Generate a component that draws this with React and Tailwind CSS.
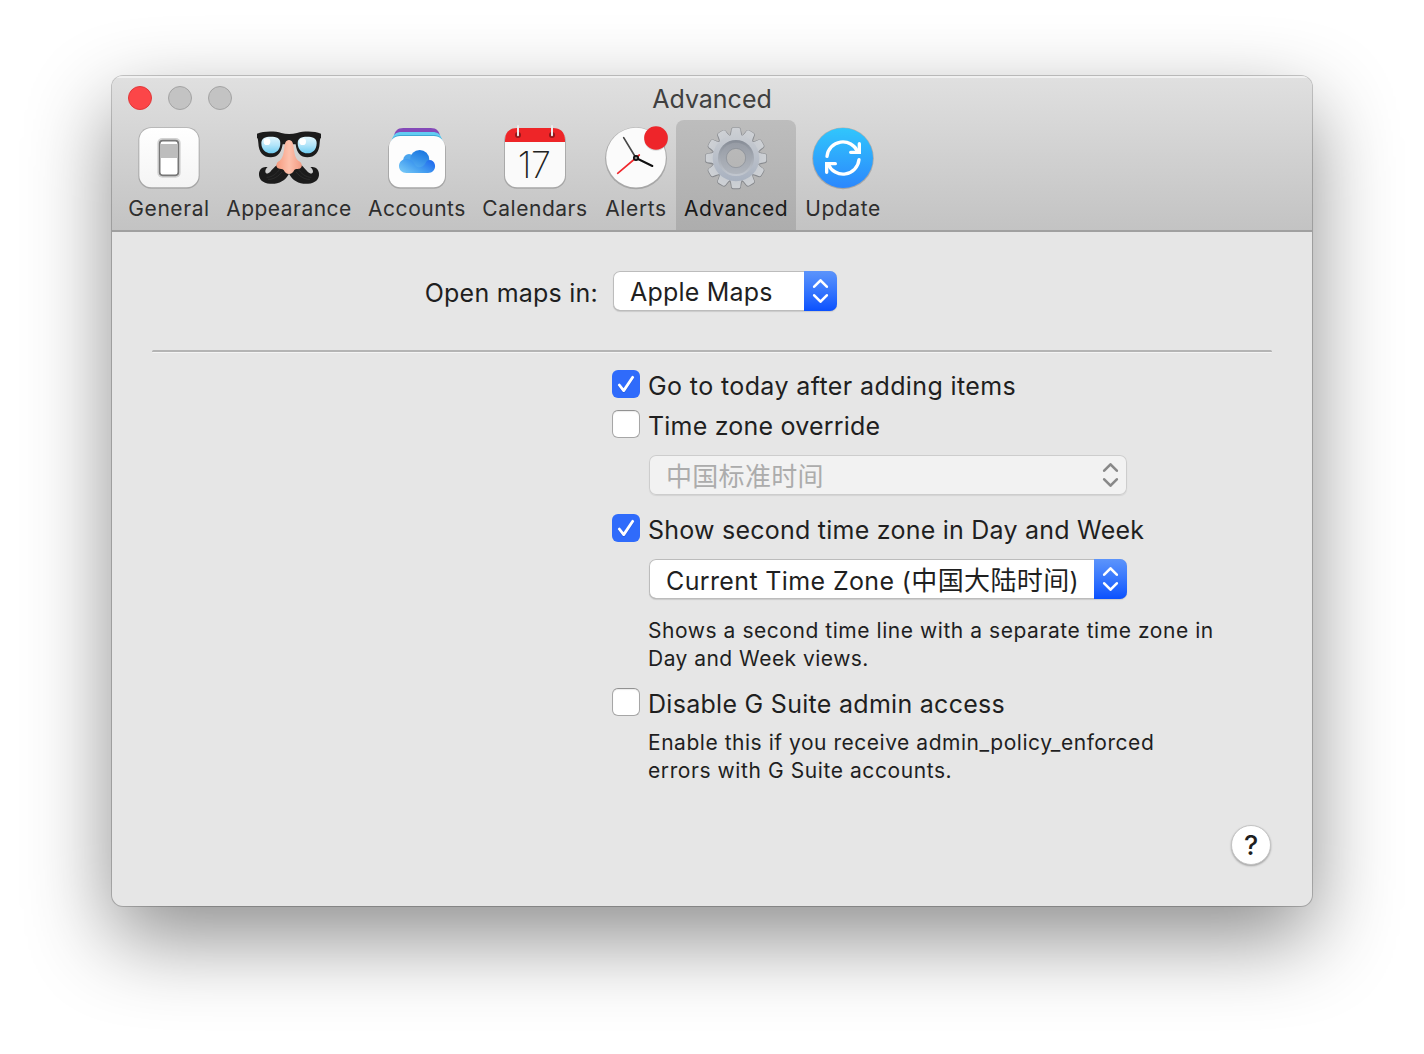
function GeneralIcon() {
  return (
    <svg viewBox="111 183 192 192" className="size-16 overflow-visible">
      <defs>
        <linearGradient id="tile" x1="0" y1="0" x2="0" y2="1">
          <stop offset="0" stopColor="#ffffff" />
          <stop offset="1" stopColor="#f4f4f4" />
        </linearGradient>
      </defs>
      <rect x="115" y="187" width="184" height="184" rx="38" fill="#000" opacity="0.18" />
      <rect x="118" y="189" width="178" height="178" rx="36" fill="url(#tile)" />
      <rect x="172" y="219" width="70" height="119" rx="15" fill="#d2d2d2" />
      <rect x="179" y="227" width="56" height="104" rx="9" fill="#fff" stroke="#777" strokeWidth="5" />
      <rect x="183" y="237" width="48" height="42" fill="#bdbdbd" />
    </svg>
  );
}

function AppearanceIcon() {
  return (
    <svg viewBox="51 33 192 192" className="size-16 overflow-visible">
      <defs>
        <linearGradient id="lens" x1="0" y1="0" x2="0" y2="1">
          <stop offset="0" stopColor="#e2f6fd" />
          <stop offset="0.5" stopColor="#b4e5f9" />
          <stop offset="1" stopColor="#6fcdf2" />
        </linearGradient>
        <linearGradient id="nose" x1="0" y1="0" x2="1" y2="0">
          <stop offset="0" stopColor="#f59a7e" />
          <stop offset="0.5" stopColor="#fdc1ac" />
          <stop offset="1" stopColor="#f29a82" />
        </linearGradient>
      </defs>
      <g fill="#1c1c1c">
        <path d="M51 56 C70 48 105 48 124 54 C138 58 156 58 171 54 C192 48 224 48 243 56 L243 68 C240 70 240 74 239 84 C238 112 224 127 202 127 C182 127 170 114 167 88 L128 88 C124 114 112 127 92 127 C70 127 56 112 55 84 C54 74 54 70 51 68 Z" />
        <path d="M147 176 C136 198 114 208 90 206 C68 205 56 192 57 176 C58 162 70 153 83 157 C78 160 76 165 76 170 C77 177 84 177 91 170 C101 159 110 148 120 148 L174 148 C186 148 192 159 203 170 C210 177 218 177 219 170 C219 165 216 160 211 157 C224 153 236 162 237 176 C238 192 226 205 204 206 C180 208 158 198 147 176 Z" />
      </g>
      <g fill="none" stroke="#4a4a4a" strokeWidth="2" opacity="0.5">
        <path d="M84 193 C100 194 115 184 126 171 M80 187 C98 187 111 174 119 163 M210 193 C194 194 179 184 168 171 M214 187 C196 187 183 174 175 163" />
      </g>
      <path d="M64 84 C64 69 76 65 92 65 C110 65 121 69 121 84 C121 104 109 115 93 115 C76 115 64 103 64 84 Z" fill="url(#lens)" />
      <path d="M173 84 C173 69 185 65 201 65 C218 65 230 69 230 84 C230 104 218 115 202 115 C185 115 173 103 173 84 Z" fill="url(#lens)" />
      <circle cx="81" cy="80" r="10" fill="#fff" />
      <circle cx="188" cy="80" r="10" fill="#fff" />
      <path d="M147 75 C137 75 134 86 133 98 C131 118 127 130 119 137 C108 142 106 154 114 160 C121 164 127 160 131 165 C135 173 140 177 147 177 C154 177 159 173 163 165 C167 160 174 164 181 160 C189 154 186 142 175 137 C167 130 163 118 161 98 C160 86 157 75 147 75 Z" fill="url(#nose)" />
    </svg>
  );
}

function AccountsIcon() {
  return (
    <svg viewBox="75 33 192 192" className="size-16 overflow-visible">
      <defs>
        <linearGradient id="cloud" x1="0" y1="1" x2="1" y2="0.4">
          <stop offset="0" stopColor="#7fcff8" />
          <stop offset="0.55" stopColor="#459ff0" />
          <stop offset="1" stopColor="#2470ee" />
        </linearGradient>
        <linearGradient id="puff" x1="0.2" y1="1" x2="0.6" y2="0">
          <stop offset="0" stopColor="#57b0f3" />
          <stop offset="1" stopColor="#1a77e0" />
        </linearGradient>
      </defs>
      <rect x="84" y="66" width="174" height="155" rx="36" fill="#000" opacity="0.18" />
      <path d="M101 70 C103 48 112 39 130 39 L212 39 C230 39 239 48 241 70 Z" fill="#8449b8" />
      <path d="M95 78 C99 58 108 51 126 51 L216 51 C234 51 243 58 247 78 Z" fill="#63cdf2" />
      <path d="M92 84 C96 67 106 60 124 60 L218 60 C236 60 246 67 250 84 Z" fill="#3fa9d4" />
      <rect x="87" y="63" width="168" height="154" rx="34" fill="#fdfdfd" />
      <circle cx="147" cy="134" r="17" fill="#4ba5ee" />
      <circle cx="179" cy="134" r="29" fill="url(#puff)" />
      <path d="M139 174 C126 174 117 165 117 153 C117 142 125 133 137 132 C150 131 162 140 165 150 C174 162 190 158 198 142 C204 130 222 134 225 150 C227 164 217 174 204 174 Z" fill="url(#cloud)" />
    </svg>
  );
}

function CalendarsIcon() {
  return (
    <svg viewBox="429 33 192 192" className="size-16 overflow-visible">
      <rect x="432" y="40" width="186" height="181" rx="38" fill="#000" opacity="0.18" />
      <rect x="435" y="39" width="180" height="178" rx="36" fill="#fafafa" />
      <path d="M435 81 L435 75 C435 52 449 39 471 39 L579 39 C601 39 615 52 615 75 L615 81 Z" fill="#ee2528" />
      <circle cx="474" cy="60" r="9" fill="#94171b" />
      <circle cx="576" cy="60" r="9" fill="#94171b" />
      <path d="M474 33 V61 M576 33 V61" stroke="#ececec" strokeWidth="6" strokeLinecap="round" />
      <text x="522" y="188" textAnchor="middle" fontSize="108" fontWeight="200" letterSpacing="-2" fill="#222" className="font-['Inter',sans-serif]">17</text>
    </svg>
  );
}

function AlertsIcon() {
  return (
    <svg viewBox="42 33 192 192" className="size-16 overflow-visible">
      <circle cx="138" cy="130" r="93" fill="#000" opacity="0.18" />
      <circle cx="138" cy="128" r="89.500" fill="#fbfbfb" />
      <g strokeLinecap="round" fill="none">
        <path d="M138 129 L101 68" stroke="#484848" strokeWidth="5" />
        <path d="M148 120 L83 175" stroke="#f0282d" strokeWidth="5" />
        <path d="M138 129 L187 153" stroke="#111" strokeWidth="6" />
      </g>
      <circle cx="138" cy="129" r="6.500" fill="#888" stroke="#0d0d0d" strokeWidth="5" />
      <circle cx="198" cy="71" r="36" fill="#000" opacity="0.15" />
      <circle cx="198" cy="69" r="35.500" fill="#ee252a" />
    </svg>
  );
}

const TEETH = [0, 30, 60, 90, 120, 150, 180, 210, 240, 270, 300, 330];

function AdvancedIcon() {
  return (
    <svg viewBox="102 153 192 192" className="size-16 overflow-visible">
      <defs>
        <linearGradient id="gear" gradientUnits="userSpaceOnUse" x1="0" y1="158" x2="0" y2="340">
          <stop offset="0" stopColor="#ced1d5" />
          <stop offset="0.5" stopColor="#b9bfc9" />
          <stop offset="1" stopColor="#a3adbd" />
        </linearGradient>
        <linearGradient id="ring" x1="0" y1="0" x2="0" y2="1">
          <stop offset="0" stopColor="#868c96" />
          <stop offset="1" stopColor="#c3c8d0" />
        </linearGradient>
        <linearGradient id="dish" x1="0" y1="0" x2="0" y2="1">
          <stop offset="0" stopColor="#979ca5" />
          <stop offset="1" stopColor="#b0b5bd" />
        </linearGradient>
        <mask id="bore">
          <rect x="90" y="140" width="220" height="220" fill="#fff" />
          <circle cx="198" cy="249" r="28" fill="#000" />
        </mask>
        <g id="cog">
          {TEETH.map((a) => (
            <path key={a} transform={`rotate(${a} 198 249)`} d="M176 190 C184 180 184 173 185 163 Q186 158 191 158 L205 158 Q210 158 211 163 C212 173 212 180 220 190 Z" />
          ))}
          <circle cx="198" cy="249" r="70" />
        </g>
      </defs>
      <g mask="url(#bore)">
        <use href="#cog" fill="#5f646c" stroke="#686c73" strokeWidth="4" opacity="0.6" transform="translate(0 1)" />
        <use href="#cog" fill="url(#gear)" />
        <circle cx="198" cy="249" r="54" fill="url(#ring)" />
        <circle cx="198" cy="250" r="47" fill="url(#dish)" />
      </g>
      <circle cx="198" cy="249" r="29" fill="none" stroke="#8b8f96" strokeWidth="2" />
    </svg>
  );
}

function UpdateIcon() {
  return (
    <svg viewBox="423 153 192 192" className="size-16 overflow-visible">
      <defs>
        <linearGradient id="sync" x1="0" y1="0" x2="0" y2="1">
          <stop offset="0" stopColor="#31c6fc" />
          <stop offset="1" stopColor="#2b87fd" />
        </linearGradient>
      </defs>
      <circle cx="519" cy="250" r="92.500" fill="#000" opacity="0.18" />
      <circle cx="519" cy="249" r="90" fill="url(#sync)" />
      <g fill="none" stroke="#fff" strokeWidth="10" strokeLinecap="round">
        <path d="M471 244 A48 48 0 0 1 563 230" />
        <path d="M567 254 A48 48 0 0 1 475 268" />
        <path d="M568 206 V232 H542" />
        <path d="M470 292 V266 H496" />
      </g>
      <path d="M568 218 V232 H554 Z M470 280 V266 H484 Z" fill="#fff" />
    </svg>
  );
}

const TABS = [
  { name: "General", Icon: GeneralIcon, width: "w-[98px]", track: "tracking-[0.57px]" },
  { name: "Appearance", Icon: AppearanceIcon, width: "w-[142px]", track: "tracking-[0.48px]" },
  { name: "Accounts", Icon: AccountsIcon, width: "w-[114px]", track: "tracking-[0.52px]" },
  { name: "Calendars", Icon: CalendarsIcon, width: "w-[122px]", track: "tracking-[0.54px]" },
  { name: "Alerts", Icon: AlertsIcon, width: "w-[80px]", track: "tracking-[0.65px]" },
  { name: "Advanced", Icon: AdvancedIcon, width: "w-[120px]", track: "tracking-[0.45px]", active: true },
  { name: "Update", Icon: UpdateIcon, width: "w-[94px]", track: "tracking-[0.6px]" },
];

function Chevrons() {
  return (
    <svg viewBox="0 0 33 40" className="h-10 w-[33px]" fill="none" stroke="currentColor" strokeWidth="2.600" strokeLinecap="round" strokeLinejoin="round">
      <path d="M10.200 15.700 L16.500 9.300 L22.800 15.700 M10.200 24.300 L16.500 30.700 L22.800 24.300" />
    </svg>
  );
}

function Select({ children, width, disabled }) {
  return (
    <div className={`${width} flex h-10 overflow-hidden rounded-[7px] ${disabled ? "bg-[#f2f2f2] text-[#acacac] shadow-[inset_0_0_0_1px_#cdcdcd,0_1px_1px_rgba(0,0,0,0.08)]" : "bg-white text-[#1f1f1f] shadow-[inset_0_0_0_1px_#bcbcbc,inset_0_-1px_0_#a8a8a8,0_1px_1px_rgba(0,0,0,0.12)]"}`}>
      <div className="flex flex-1 items-center pl-[17px] text-[25px] whitespace-nowrap">{children}</div>
      <div className={disabled ? "text-[#888888]" : "bg-linear-to-b from-[#5c94fb] to-[#0a50fe] text-white"}>
        <Chevrons />
      </div>
    </div>
  );
}

function Checkbox({ checked, children }) {
  return (
    <div className="flex h-7 items-center">
      {checked ? (
        <div className="size-7 shrink-0 rounded-md bg-[#2f6bfb]">
          <svg viewBox="0 0 28 28" className="size-7" fill="none" strokeLinecap="round" strokeLinejoin="round" strokeWidth="2.800">
            <path d="M7.300 16 L11.700 21.600 L20.700 8.300" stroke="#1c4fd0" opacity="0.5" />
            <path d="M7.300 15 L11.700 20.600 L20.700 7.300" stroke="#fff" />
          </svg>
        </div>
      ) : (
        <div className="size-7 shrink-0 rounded-md border border-[#a6a6a6] border-t-[#929292] bg-white shadow-[inset_0_1px_1px_rgba(0,0,0,0.08)]" />
      )}
      <div className="pt-1 pl-2 text-[25px] leading-7 whitespace-nowrap">{children}</div>
    </div>
  );
}

export default function App() {
  return (
    <div className="h-[1054px] w-[1424px] overflow-hidden bg-white px-28 pt-[76px] font-['Inter','Noto_Sans_CJK_SC',sans-serif]">
      <div className="flex h-[830px] w-[1200px] flex-col overflow-hidden rounded-[11px] bg-[#e6e6e6] text-[#1f1f1f] shadow-[0_0_0_1px_rgba(0,0,0,0.2),0_32px_84px_rgba(0,0,0,0.45)]">
        <header className="flex h-[156px] shrink-0 flex-col border-b-2 border-[#a0a0a0] bg-linear-to-b from-[#e0e0e0] to-[#c3c3c3] shadow-[inset_0_2px_0_#f0f0f0]">
          <div className="grid h-11 grid-cols-[1fr_auto_1fr] items-center px-4">
            <div className="flex gap-4">
              <span className="size-6 rounded-full border border-[#e0383a] bg-[#fc4648]" />
              <span className="size-6 rounded-full border border-[#a3a3a3] bg-[#c3c3c3]" />
              <span className="size-6 rounded-full border border-[#a3a3a3] bg-[#c3c3c3]" />
            </div>
            <h1 className="pt-1 text-[25px] text-[#404040]">Advanced</h1>
          </div>
          <nav className="flex h-[110px] pl-2">
            {TABS.map(({ name, Icon, width, track, active }) => (
              <div key={name} className={`${width} flex flex-col items-center rounded-t-lg pt-1.5 ${active ? "bg-linear-to-b from-[#bdbdbd] to-[#adadad] text-[#1a1a1a]" : "text-[#2e2e2e]"}`}>
                <Icon />
                <span className={`${track} mt-[5px] text-[21px] leading-7 whitespace-nowrap`}>{name}</span>
              </div>
            ))}
          </nav>
        </header>
        <main className="flex flex-1 flex-col px-10 pt-[39px]">
          <div className="flex items-center">
            <div className="w-[446px] pt-1 text-right text-[25px] leading-9 tracking-[0.23px]">Open maps in:</div>
            <div className="pl-[15px]">
              <Select width="w-[224px]"><span className="pt-1 tracking-[0.2px]">Apple Maps</span></Select>
            </div>
          </div>
          <hr className="mt-[39px] h-[3px] rounded border-t-2 border-b border-t-[#b4b4b4] border-b-[#f4f4f4]" />
          <div className="flex flex-col pt-[17px] pl-[460px]">
            <Checkbox checked><span className="tracking-[0.39px]">Go to today after adding items</span></Checkbox>
            <div className="mt-3"><Checkbox><span className="tracking-[0.2px]">Time zone override</span></Checkbox></div>
            <div className="mt-[17px] pl-[37px]">
              <Select width="w-[478px]" disabled><span className="pt-0.5 text-[26px] tracking-[0.3px]">中国标准时间</span></Select>
            </div>
            <div className="mt-[19px]"><Checkbox checked><span className="tracking-[0.235px]">Show second time zone in Day and Week</span></Checkbox></div>
            <div className="mt-[17px] pl-[37px]">
              <Select width="w-[478px]"><span className="pt-1 tracking-[0.37px]">Current Time Zone (<span className="text-[26px]">中国大陆时间</span>)</span></Select>
            </div>
            <p className="mt-[18px] pl-9 text-[21px] leading-7 whitespace-nowrap">
              <span className="tracking-[0.55px]">Shows a second time line with a separate time zone in</span>
              <br />
              <span className="tracking-[0.47px]">Day and Week views.</span>
            </p>
            <div className="mt-[15px]"><Checkbox><span className="tracking-[0.285px]">Disable G Suite admin access</span></Checkbox></div>
            <p className="mt-[13px] pl-9 text-[21px] leading-7 whitespace-nowrap">
              <span className="tracking-[0.53px]">Enable this if you receive admin_policy_enforced</span>
              <br />
              <span className="tracking-[0.58px]">errors with G Suite accounts.</span>
            </p>
          </div>
          <button className="mt-10 mr-px flex size-10 items-center justify-center self-end rounded-full border border-[#c4c4c4] bg-white pt-0.5 text-[27px] font-medium shadow-[0_1px_2px_rgba(0,0,0,0.3)]">?</button>
        </main>
      </div>
    </div>
  );
}
